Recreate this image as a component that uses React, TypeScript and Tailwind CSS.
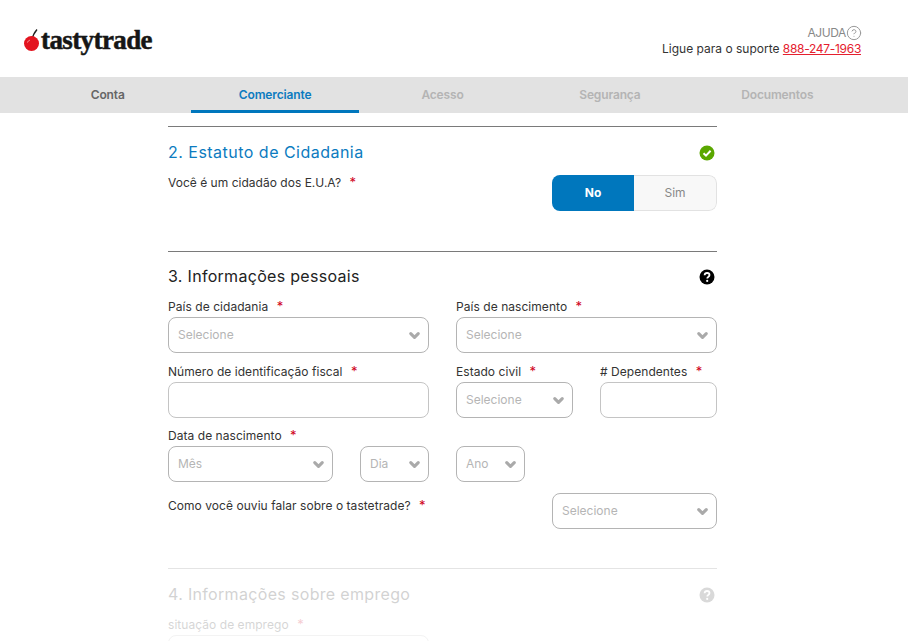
import { ChevronDown, HelpCircle } from 'lucide-react';

const bodyFont = "[font-family:Inter,'Noto_Sans',sans-serif]";

function Star() {
  return <span className="ml-[5px] text-[13px] text-[#d0021b]">*</span>;
}

function Label({ text }: { text: string }) {
  return (
    <label className="block h-[19px] text-[12px] leading-[17px] tracking-[0.05px] text-[#333]">
      {text} <Star />
    </label>
  );
}

function Select({ placeholder = 'Selecione' }: { placeholder?: string }) {
  return (
    <div className="flex h-[36px] items-center justify-between rounded-lg border border-[#b4b4b4] bg-white pl-[9px] pr-[6px]">
      <span className="text-[12px] text-[#b5b5b5]">{placeholder}</span>
      <ChevronDown className="h-[15px] w-[15px] text-[#aaa]" strokeWidth={5} />
    </div>
  );
}

function TextField() {
  return <div className="h-[36px] rounded-lg border border-[#c4c4c4] bg-white" />;
}

function CheckBadge() {
  return (
    <svg viewBox="0 0 16 16" className="mt-[2px] h-[16px] w-[16px]">
      <circle cx="8" cy="8" r="7.500" fill="#5aa700" />
      <path d="M4.500 8.200 7 10.600 11.600 5.800" fill="none" stroke="#fff" strokeWidth="2" />
    </svg>
  );
}

function QuestionBadge({ color }: { color: string }) {
  return (
    <svg viewBox="0 0 16 16" className="mt-[2px] h-[16px] w-[16px]">
      <circle cx="8" cy="8" r="7.500" fill={color} />
      <path d="M5.600 6.200C5.700 4.800 6.700 4 8.100 4c1.400 0 2.400.8 2.400 2 0 1-.6 1.500-1.300 2-.6.4-.9.7-.9 1.500" fill="none" stroke="#fff" strokeWidth="1.800" />
      <circle cx="8.200" cy="11.900" r="1.100" fill="#fff" />
    </svg>
  );
}

function Logo() {
  return (
    <div className="mt-[3px] flex items-center">
      <svg viewBox="0 0 17 24" className="h-[24px] w-[17px] shrink-0">
        <path d="M8 12C8.500 8 10 5 13 1.500" fill="none" stroke="#222" strokeWidth="1.300" />
        <circle cx="7.500" cy="15.500" r="7.500" fill="#e3141f" />
        <path d="M3.500 14.500c.4-1.300 1.200-2 2.400-2.300" fill="none" stroke="#f7a0a0" strokeWidth="1" />
      </svg>
      <span className="text-[27px] font-bold leading-none tracking-[-0.6px] text-[#161616] [-webkit-text-stroke:0.5px_#161616] [font-family:'Liberation_Serif',serif]">
        tastytrade
      </span>
    </div>
  );
}

const tabs = [
  { name: 'Conta', cls: 'text-[#666]' },
  { name: 'Comerciante', cls: 'text-[#0c7bc0] border-y-[3px] border-t-transparent border-b-[#0077bd]' },
  { name: 'Acesso', cls: 'text-[#b4b4b4]' },
  { name: 'Segurança', cls: 'text-[#b4b4b4]' },
  { name: 'Documentos', cls: 'text-[#b4b4b4]' },
];

export default function App() {
  return (
    <div className={`h-screen overflow-hidden bg-white ${bodyFont}`}>
      <header className="flex h-[77px] items-center justify-between pl-[24px] pr-[47px]">
        <Logo />
        <div className="pt-[5px] text-right text-[12px] leading-[16px] text-[#333]">
          <div className="flex items-center justify-end tracking-[-0.4px] text-[#888]">
            AJUDA
            <HelpCircle className="-mr-[1px] ml-0 h-[16px] w-[16px] text-[#999]" strokeWidth={1.5} />
          </div>
          <div>
            Ligue para o suporte{' '}
            <span className="tracking-[-0.3px] text-[#e5202e] underline">888-247-1963</span>
          </div>
        </div>
      </header>

      <nav className="grid h-[36px] grid-cols-5 bg-[#e2e2e2] pl-[24px] pr-[47px] text-[12px] font-semibold tracking-[-0.15px]">
        {tabs.map((tab) => (
          <div key={tab.name} className={`flex items-center justify-center ${tab.cls}`}>
            {tab.name}
          </div>
        ))}
      </nav>

      <main className="ml-[168px] w-[549px] pt-[13px]">
        <section className="h-[125px] border-t border-[#7a7a7a]">
          <div className="flex h-[49px] items-center justify-between pr-[2px]">
            <h2 className="text-[16px] font-normal tracking-[0.48px] text-[#0c7bc0]">2. Estatuto de Cidadania</h2>
            <CheckBadge />
          </div>
          <div className="flex items-start justify-between">
            <p className="text-[12px] leading-[12px] tracking-[0.02px] text-[#333]">
              Você é um cidadão dos E.U.A? <Star />
            </p>
            <div className="-mt-px flex h-[36px] w-[165px] overflow-hidden rounded-lg">
              <div className="flex w-[82px] items-center justify-center bg-[#0077bd] text-[12px] font-bold text-white">No</div>
              <div className="flex flex-1 items-center justify-center rounded-r-lg border border-l-0 border-[#e2e2e2] bg-[#f8f8f8] text-[12px] text-[#888]">Sim</div>
            </div>
          </div>
        </section>

        <section className="h-[317px] border-t border-[#7a7a7a]">
          <div className="-mb-[2px] flex h-[48px] items-center justify-between pr-[2px]">
            <h2 className="text-[16px] font-normal tracking-[0.3px] text-[#222]">3. Informações pessoais</h2>
            <QuestionBadge color="#000" />
          </div>
          <div className="grid grid-cols-6 gap-x-[27px]">
            <div className="col-span-3">
              <Label text="País de cidadania" />
              <Select />
            </div>
            <div className="col-span-3">
              <Label text="País de nascimento" />
              <Select />
            </div>
            <div className="col-span-3 mt-[10px]">
              <Label text="Número de identificação fiscal" />
              <TextField />
            </div>
            <div className="col-span-3 mt-[10px] grid grid-cols-2 gap-x-[27px]">
              <div>
                <Label text="Estado civil" />
                <Select />
              </div>
              <div>
                <Label text="# Dependentes" />
                <TextField />
              </div>
            </div>
            <div className="col-span-6 mt-[9px]">
              <Label text="Data de nascimento" />
            </div>
            <div className="col-span-2">
              <Select placeholder="Mês" />
            </div>
            <div>
              <Select placeholder="Dia" />
            </div>
            <div>
              <Select placeholder="Ano" />
            </div>
            <div className="col-span-2" />
            <div className="col-span-4 mt-[11px]">
              <p className="text-[12px] leading-[24px] tracking-[0.05px] text-[#333]">
                Como você ouviu falar sobre o tastetrade? <Star />
              </p>
            </div>
            <div className="col-span-2 mt-[11px]">
              <Select />
            </div>
          </div>
        </section>

        <section className="border-t border-[#e4e4e4]">
          <div className="-mb-[3px] flex h-[50px] items-center justify-between pr-[2px] opacity-20">
            <h2 className="text-[16px] font-normal tracking-[0.33px] text-[#222]">4. Informações sobre emprego</h2>
            <QuestionBadge color="#444" />
          </div>
          <div className="opacity-20">
            <Label text="situação de emprego" />
            <div className="w-[261px]">
              <TextField />
            </div>
          </div>
        </section>
      </main>
    </div>
  );
}
